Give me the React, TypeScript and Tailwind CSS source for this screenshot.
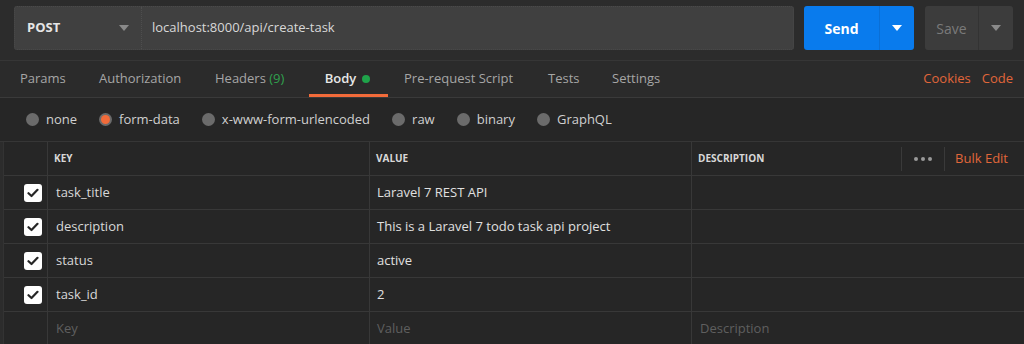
import React from "react";

const Caret = ({ color }: { color: string }) => (
  <svg width="10" height="6" viewBox="0 0 10 6">
    <path d="M0 0 L10 0 L5 6 Z" fill={color} />
  </svg>
);

const Check = () => (
  <div className="w-[18px] h-[18px] rounded-[3px] bg-white flex items-center justify-center">
    <svg width="12" height="10" viewBox="0 0 12 10">
      <path d="M1.5 5.2 L4.5 8 L10.5 1.8" stroke="#262626" strokeWidth="2.2" fill="none" strokeLinecap="round" strokeLinejoin="round" />
    </svg>
  </div>
);

const Radio = ({ label, active }: { label: string; active?: boolean }) => (
  <div className="flex items-center gap-[7px]">
    {active ? (
      <div className="w-[13px] h-[13px] rounded-full bg-[#6b6b6b] flex items-center justify-center">
        <div className="w-[9px] h-[9px] rounded-full bg-[#f26b3a]" />
      </div>
    ) : (
      <div className="w-[13px] h-[13px] rounded-full bg-[#6b6b6b]" />
    )}
    <span className="text-[13px] text-[#d0d0d0]">{label}</span>
  </div>
);

const rows = [
  ["task_title", "Laravel 7 REST API"],
  ["description", "This is a Laravel 7 todo task api project"],
  ["status", "active"],
  ["task_id", "2"],
];

export default function App() {
  return (
    <div
      className="w-[1024px] h-[344px] overflow-hidden bg-[#2c2c2c] flex flex-col"
      style={{ fontFamily: '"Open Sans", "Noto Sans", sans-serif' }}
    >
      {/* Top bar */}
      <div className="h-[61px] shrink-0 flex items-start pt-[6px] pl-[14px] pr-[11px] border-b border-[#363636]">
        <div className="flex h-[44px] w-[780px] bg-[#404040] rounded-[3px] border border-dotted border-[#4a4a4a]">
          <div className="w-[127px] flex items-center justify-between pl-[12px] pr-[12px] border-r border-dotted border-[#4e4e4e]">
            <span className="text-[13px] font-bold text-[#e6e6e6]">POST</span>
            <Caret color="#8a8a8a" />
          </div>
          <div className="flex items-center pl-[10px]">
            <span className="text-[13px] text-[#d8d8d8]">localhost:8000/api/create-task</span>
          </div>
        </div>
        <div className="ml-[10px] flex h-[44px] w-[110px] bg-[#097bed] rounded-[3px]">
          <div className="w-[76px] flex items-center justify-center border-r border-[#0a6fd6]">
            <span className="text-[14px] font-bold text-white">Send</span>
          </div>
          <div className="flex-1 flex items-center justify-center">
            <Caret color="#ffffff" />
          </div>
        </div>
        <div className="ml-[11px] flex h-[44px] w-[88px] bg-[#3c3c3c] rounded-[3px]">
          <div className="w-[54px] flex items-center justify-center border-r border-[#333333]">
            <span className="text-[14px] text-[#7a7a7a]">Save</span>
          </div>
          <div className="flex-1 flex items-center justify-center">
            <Caret color="#8a8a8a" />
          </div>
        </div>
      </div>

      {/* Tabs */}
      <div className="h-[37px] shrink-0 flex items-stretch pl-[20px] pr-[11px] border-b border-[#3a3a3a] bg-[#2b2b2b]">
        <div className="flex items-center text-[13px] text-[#a6a6a6]">
          <span className="w-[79px]">Params</span>
          <span className="w-[116px]">Authorization</span>
          <span className="w-[94px]">
            Headers <span className="text-[#30a14e]">(9)</span>
          </span>
        </div>
        <div className="relative w-[79px] flex items-center justify-center">
          <span className="text-[13px] font-semibold text-[#e8e8e8] -ml-[2px]">Body</span>
          <span className="ml-[6px] w-[8px] h-[8px] rounded-full bg-[#1fa34a]" />
          <div className="absolute left-0 right-0 bottom-0 h-[3px] bg-[#f26b3a]" />
        </div>
        <div className="flex items-center text-[13px] text-[#a6a6a6] pl-[16px]">
          <span className="w-[144px]">Pre-request Script</span>
          <span className="w-[64px]">Tests</span>
          <span>Settings</span>
        </div>
        <div className="ml-auto flex items-center gap-[11px] text-[13px] text-[#e0663a]">
          <span>Cookies</span>
          <span>Code</span>
        </div>
      </div>

      {/* Radio row */}
      <div className="h-[44px] shrink-0 flex items-center pl-[26px] gap-[22px] bg-[#262626] border-b border-[#363636]">
        <Radio label="none" />
        <Radio label="form-data" active />
        <Radio label="x-www-form-urlencoded" />
        <Radio label="raw" />
        <Radio label="binary" />
        <Radio label="GraphQL" />
      </div>

      {/* Table */}
      <div className="flex-1 bg-[#262626] ml-[3px] border-l border-[#333333]">
        <div className="h-[34px] flex border-b border-[#383838]">
          <div className="w-[44px] border-r border-[#383838]" />
          <div className="w-[322px] border-r border-[#383838] flex items-center pl-[6px]">
            <span className="text-[10px] font-bold text-[#d8d8d8]">KEY</span>
          </div>
          <div className="w-[322px] border-r border-[#383838] flex items-center pl-[6px]">
            <span className="text-[10px] font-bold text-[#d8d8d8]">VALUE</span>
          </div>
          <div className="flex-1 flex items-center pl-[6px]">
            <span className="text-[10px] font-bold text-[#d8d8d8]">DESCRIPTION</span>
            <div className="ml-auto flex items-center h-full">
              <div className="w-px h-[24px] bg-[#3a3a3a]" />
              <div className="flex gap-[3px] px-[12px]">
                <span className="w-[4px] h-[4px] rounded-full bg-[#9a9a9a]" />
                <span className="w-[4px] h-[4px] rounded-full bg-[#9a9a9a]" />
                <span className="w-[4px] h-[4px] rounded-full bg-[#9a9a9a]" />
              </div>
              <div className="w-px h-[24px] bg-[#3a3a3a]" />
              <span className="text-[13px] text-[#e0663a] pl-[10px] pr-[16px]">Bulk Edit</span>
            </div>
          </div>
        </div>
        {rows.map(([k, v]) => (
          <div key={k} className="h-[34px] flex border-b border-[#383838]">
            <div className="w-[44px] border-r border-[#383838] flex items-center justify-end pr-[5px]">
              <Check />
            </div>
            <div className="w-[322px] border-r border-[#383838] flex items-center pl-[8px]">
              <span className="text-[13px] text-[#d8d8d8]">{k}</span>
            </div>
            <div className="w-[322px] border-r border-[#383838] flex items-center pl-[7px]">
              <span className="text-[13px] text-[#e0e0e0]">{v}</span>
            </div>
            <div className="flex-1" />
          </div>
        ))}
        <div className="h-[34px] flex">
          <div className="w-[44px] border-r border-[#383838]" />
          <div className="w-[322px] border-r border-[#383838] flex items-center pl-[8px]">
            <span className="text-[13px] text-[#5f5f5f]">Key</span>
          </div>
          <div className="w-[322px] border-r border-[#383838] flex items-center pl-[7px]">
            <span className="text-[13px] text-[#5f5f5f]">Value</span>
          </div>
          <div className="flex-1 flex items-center pl-[8px]">
            <span className="text-[13px] text-[#5f5f5f]">Description</span>
          </div>
        </div>
      </div>
    </div>
  );
}
